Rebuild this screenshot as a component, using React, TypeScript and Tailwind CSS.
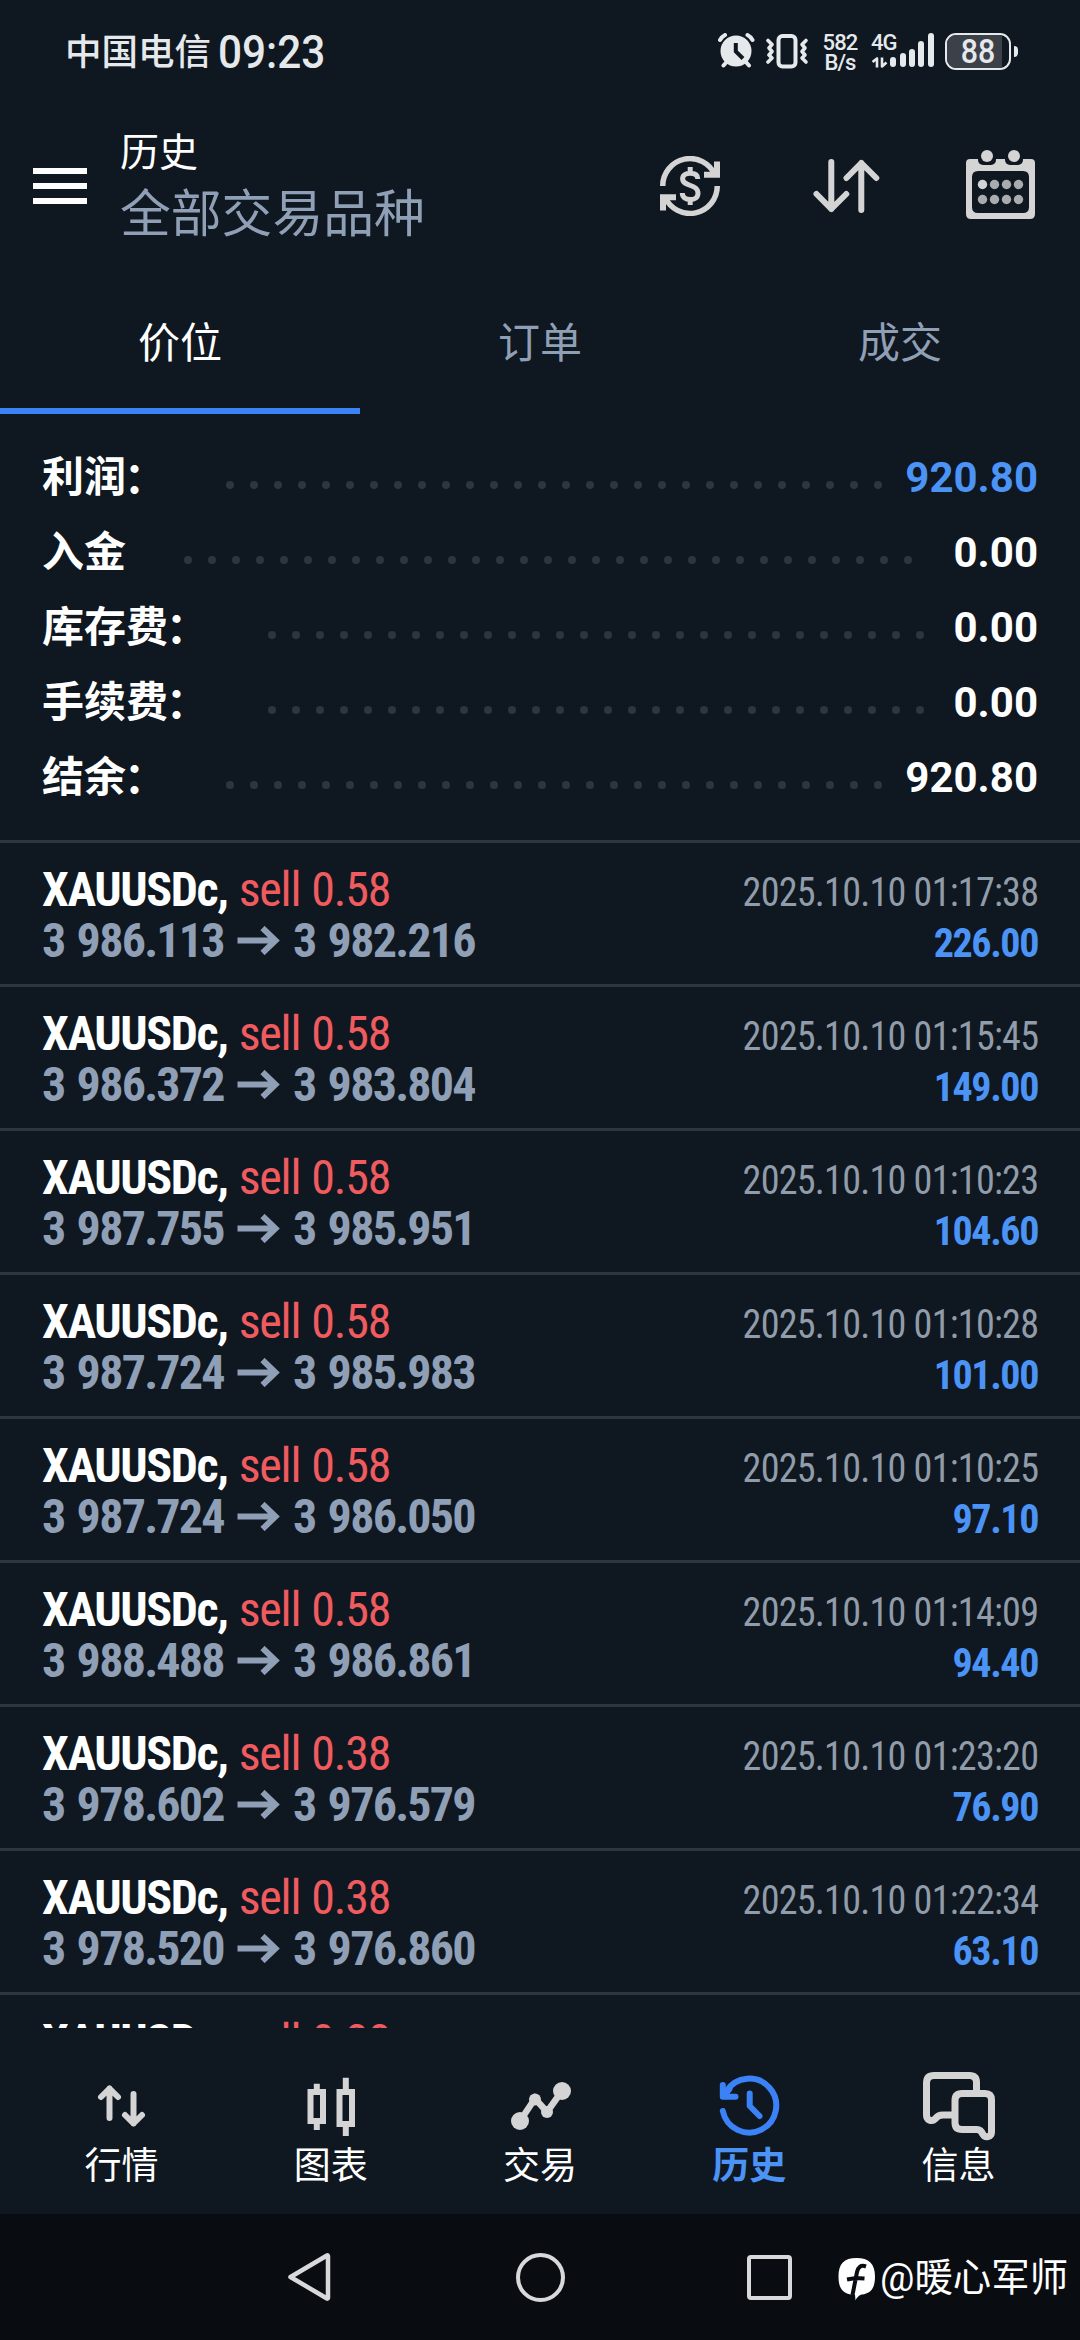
import React from 'react';

const summary = [
  { label: '利润', colon: true, value: '920.80', dots: 28, color: 'text-[#4b93f5]' },
  { label: '入金', colon: false, value: '0.00', dots: 31, color: 'text-white' },
  { label: '库存费', colon: true, value: '0.00', dots: 28, color: 'text-white' },
  { label: '手续费', colon: true, value: '0.00', dots: 28, color: 'text-white' },
  { label: '结余', colon: true, value: '920.80', dots: 28, color: 'text-white' }
];

const deals = [
  { volume: '0.58', open: '3 986.113', close: '3 982.216', time: '2025.10.10 01:17:38', profit: '226.00' },
  { volume: '0.58', open: '3 986.372', close: '3 983.804', time: '2025.10.10 01:15:45', profit: '149.00' },
  { volume: '0.58', open: '3 987.755', close: '3 985.951', time: '2025.10.10 01:10:23', profit: '104.60' },
  { volume: '0.58', open: '3 987.724', close: '3 985.983', time: '2025.10.10 01:10:28', profit: '101.00' },
  { volume: '0.58', open: '3 987.724', close: '3 986.050', time: '2025.10.10 01:10:25', profit: '97.10' },
  { volume: '0.58', open: '3 988.488', close: '3 986.861', time: '2025.10.10 01:14:09', profit: '94.40' },
  { volume: '0.38', open: '3 978.602', close: '3 976.579', time: '2025.10.10 01:23:20', profit: '76.90' },
  { volume: '0.38', open: '3 978.520', close: '3 976.860', time: '2025.10.10 01:22:34', profit: '63.10' },
  { volume: '0.38', open: '3 978.520', close: '3 976.880', time: '2025.10.10 01:22:30', profit: '62.30' }
];

const signalBars = ['h-[10px]', 'h-[14px]', 'h-[18px]', 'h-[26px]', 'h-[34px]'];

function StatusBar() {
  return (
    <div className="h-[108px] flex items-start justify-between pl-[65px] pr-[62px] pt-[30px] text-[#e6e9ec]">
      <div className="flex h-[42px] items-center font-medium">
        <span className="text-[36.5px] leading-[42px] w-[153px] pt-[3px] whitespace-nowrap">中国电信</span>
        <span className="text-[46px] leading-[42px] pt-[2px] origin-left scale-x-[0.92] whitespace-nowrap">09:23</span>
      </div>

      <div className="flex h-[42px] items-center">
        <svg width="37" height="36" viewBox="0 0 37 36" fill="none" stroke="currentColor" strokeWidth="4" strokeLinecap="round">
          <circle cx="18" cy="18" r="15.5" fill="currentColor" stroke="none" />
          <path d="M2 7 Q4 3.5 7 2 M29.5 2 Q32.5 3.5 34.5 7 M5.5 32.5 L9 28.5 M31 32.5 L27.5 28.5" />
          <path d="M17.8 10 V18.5 L25 25.5" stroke="#0f1720" strokeLinecap="butt" />
        </svg>
        <svg className="ml-[11px]" width="43" height="35" viewBox="0 0 43 35" fill="none" stroke="currentColor" strokeWidth="3.6" strokeLinecap="round" strokeLinejoin="round">
          <rect x="12.5" y="2" width="17" height="30.5" rx="4" strokeWidth="4" />
          <path d="M2 6.5 L6 10.5 L3 14 L6 17.5 L3 21 L6 24 L2 28" />
          <path d="M40 6.5 L36 10.5 L39 14 L36 17.5 L39 21 L36 24 L40 28" />
        </svg>
        <div className="ml-[13px] w-[36px] h-[42px] text-center text-[22px] leading-[19.5px] font-medium tracking-[-0.9px] pt-[3px]">
          <div>582</div>
          <div>B/s</div>
        </div>
        <div className="ml-[13px] relative h-[42px] w-[64px]">
          <span className="absolute left-0 top-[3px] text-[22px] leading-[20px] font-medium tracking-[-1px]">4G</span>
          <svg className="absolute left-[1px] top-[27px]" width="16" height="11" viewBox="0 0 16 11" fill="none" stroke="currentColor" strokeWidth="2.6" strokeLinejoin="round">
            <path d="M0.5 5 L5 1.5 V10.5 M10 0.5 V9.5 L14.5 5.5" />
          </svg>
          <div className="absolute right-[1.5px] bottom-[5px] flex items-end gap-[3.3px]">
            {signalBars.map((height, index) => (
              <div key={index} className={`w-[6px] rounded-full bg-current ${height}`} />
            ))}
          </div>
        </div>
        <div className="ml-[10px] w-[66px] h-[37px] rounded-[11px] border-[2.5px] border-current overflow-hidden flex relative">
          <div className="w-[55px] h-full bg-[#3c4149]" />
          <span className="absolute inset-0 text-center text-[33px] leading-[33px] font-medium scale-x-[0.92]">88</span>
        </div>
        <div className="ml-[3px] w-[4px] h-[11px] rounded-r-full bg-current" />
      </div>
    </div>
  );
}

function Header() {
  return (
    <div className="h-[144px] flex items-start">
      <div className="ml-[33px] mt-[60px] w-[54px] flex flex-col gap-[9px]">
        <div className="h-[6px] bg-white" />
        <div className="h-[6px] bg-white" />
        <div className="h-[6px] bg-white" />
      </div>
      <div className="ml-[33px] mt-[20px] flex-1">
        <div className="text-[39px] leading-[50px] text-white">历史</div>
        <div className="text-[50.8px] leading-[60px] mt-[7px] text-[#8f9fb5]">全部交易品种</div>
      </div>
      <div className="flex pr-[45px] mt-[42px] text-[#d4d4d5]">
        <svg className="mt-[6px]" width="60" height="60" viewBox="0 0 60 60" fill="none" stroke="currentColor" strokeWidth="5.5">
          <path d="M2.75 30 A27.25 27.25 0 0 1 55 19" />
          <path d="M57.25 30 A27.25 27.25 0 0 1 5 41" />
          <path d="M60 5.5 V21.7 H44 V15.7 H50 L54 12 V5.5 Z M0 54.5 V38.3 H16 V44.3 H10 L6 48 V54.5 Z" fill="currentColor" stroke="none" />
          <path d="M37.8 23 C37.8 18.5 34 17.3 30 17.3 C25.5 17.3 22.6 19.5 22.6 22.8 C22.6 31 38 27.5 38 37.2 C38 41.5 34.5 43.6 30.3 43.6 C25.8 43.6 22.3 41.5 22.3 37 M30.2 11 V17 M30.2 43 V49" strokeWidth="5" />
        </svg>
        <svg className="ml-[93px] mt-[9px]" width="67" height="54" viewBox="0 0 67 54" fill="none" stroke="currentColor" strokeWidth="6" strokeLinecap="round" strokeLinejoin="round">
          <path d="M18.3 3 V50 M3.5 35 L18.3 50 L33.3 35" />
          <path d="M48.3 51 V4 M33.5 19 L48.3 4 L63.3 19" />
        </svg>
        <svg className="ml-[86px]" width="69" height="69" viewBox="0 0 69 69" fill="currentColor">
          <path fillRule="evenodd" d="M4 9 H65 Q69 9 69 13 V64 Q69 69 64 69 H5 Q0 69 0 64 V13 Q0 9 4 9 Z M12 21 Q6 21 6 27 V57 Q6 63 12 63 H57 Q63 63 63 57 V27 Q63 21 57 21 Z" />
          <rect x="12" y="2" width="18" height="13" rx="5" fill="#0f1720" />
          <rect x="39" y="2" width="18" height="13" rx="5" fill="#0f1720" />
          <circle cx="21" cy="6" r="6" />
          <circle cx="48" cy="6" r="6" />
          {[34.5, 49.5].map(cy =>
            [16.5, 28.5, 40.5, 52.5].map(cx => (
              <circle key={`${cx}-${cy}`} cx={cx} cy={cy} r="4.7" fill={cx === 16.5 && cy === 34.5 ? '#d4d4d5' : '#a9abae'} />
            ))
          )}
        </svg>
      </div>
    </div>
  );
}

function Tabs() {
  return (
    <div className="h-[162px] grid grid-cols-3 text-center text-[42px] leading-[50px] text-[#8f9fb5]">
      <div className="text-white border-b-[6px] border-[#3b82f6] pt-[67px]">价位</div>
      <div className="pt-[67px]">订单</div>
      <div className="pt-[67px]">成交</div>
    </div>
  );
}

function Summary() {
  return (
    <div className="h-[426px] pt-[26px] px-[42px] font-bold text-[42px] leading-[75px]">
      {summary.map(row => (
        <div key={row.label} className="h-[75px] flex">
          <span className="text-white">{row.label}</span>
          {row.colon && <span className="-ml-[2px] mr-[2px] mt-px text-white">：</span>}
          <div className="ml-[58px] mt-[41px] flex gap-4">
            {Array.from({ length: row.dots }, (_, index) => (
              <div key={index} className="size-2 shrink-0 rounded-full bg-[#2d353e]" />
            ))}
          </div>
          <span className={`ml-auto ${row.color}`}>{row.value}</span>
        </div>
      ))}
    </div>
  );
}

function DealList() {
  return (
    <div className="h-[1188px] overflow-hidden font-stretch-condensed">
      {deals.map((deal, index) => (
        <div key={index} className="h-[144px] border-t-[3px] border-[#2d353f] px-[42px] flex justify-between whitespace-nowrap">
          <div className="pt-[21px] text-[48px] leading-[51px]">
            <div className="h-[51px] text-[#f05b60] tracking-[-1.25px] [word-spacing:1.4px]">
              <span className="font-bold text-white tracking-[-1.4px]">XAUUSDc,</span> sell {deal.volume}
            </div>
            <div className="h-[51px] flex font-bold text-[#8f9fb5] tracking-[-1.75px] [word-spacing:2.8px]">
              <span className="w-[195px]">{deal.open}</span>
              <svg className="mt-[11px] mr-[13px]" width="43" height="29" viewBox="0 0 43 29" fill="none" stroke="currentColor" strokeWidth="6">
                <path d="M0.5 14.5 H38.5 M25.5 2 L38.5 14.5 L25.5 27" />
              </svg>
              <span>{deal.close}</span>
            </div>
          </div>
          <div className="pt-[24px] text-[40px] leading-[51px] text-right">
            <div className="text-[#919caa] tracking-[-0.8px] origin-right scale-x-[0.953]">{deal.time}</div>
            <div className="font-bold text-[#4b93f5] tracking-[-1.4px]">{deal.profit}</div>
          </div>
        </div>
      ))}
    </div>
  );
}

function BottomNav() {
  const items = [
    {
      label: '行情',
      icon: (
        <g strokeWidth="6" strokeLinecap="round" strokeLinejoin="round">
          <path d="M28.5 48 V18.5 M20 27 L28.5 18.5 L37 27" />
          <path d="M52.5 24 V53.5 M44 45 L52.5 53.5 L61 45" />
        </g>
      )
    },
    {
      label: '图表',
      icon: (
        <g strokeWidth="6">
          <path d="M20.5 22 H33 V51 H20.5 Z M26.8 13.7 V22 M26.8 51 V60" />
          <path d="M49.5 22 H62 V54 H49.5 Z M55.8 7.7 V22 M55.8 54 V66" />
        </g>
      )
    },
    {
      label: '交易',
      icon: (
        <g strokeWidth="6.5">
          <path d="M21 51 L36 28.5 L48 42 L63 21" />
          <g fill="currentColor" stroke="none">
            <circle cx="21" cy="51" r="9" />
            <circle cx="36" cy="29.5" r="6" />
            <circle cx="48" cy="42" r="6" />
            <circle cx="63" cy="21" r="9" />
          </g>
        </g>
      )
    },
    {
      label: '历史',
      active: true,
      icon: (
        <g strokeWidth="6" strokeLinecap="round" strokeLinejoin="round">
          <path d="M14.8 41 A27 27 0 1 0 18.5 21" />
          <path d="M14.8 15 V26.8 H27.5 M15.5 26 L21.5 19" />
          <path d="M41.7 23.5 V36 L51.500 46" />
        </g>
      )
    },
    {
      label: '信息',
      icon: (
        <g strokeWidth="7">
          <path d="M59.5 20 V12.5 Q59.5 5.5 52.5 5.5 H17 Q9.5 5.5 9.5 13 V45 C9.5 50.5 15 52 18 49 C21 46 22 45 26 45 H35" />
          <path d="M45 23.5 H68 Q74.5 23.5 74.5 30 V62 C74.5 67.5 68 68 66 64.5 C64.5 61 63 59.5 60 59.5 H45 Q38 59.5 38 52.5 V30.5 Q38 23.5 45 23.5 Z" />
        </g>
      )
    }
  ];

  return (
    <div className="h-[186px] pt-[42px] px-[17px] grid grid-cols-5 justify-items-center">
      {items.map(item => (
        <div key={item.label} className={`flex flex-col items-center ${item.active ? 'text-[#3b82f6]' : 'text-[#d4d4d5]'}`}>
          <svg width="82" height="75" viewBox="0 0 82 75" fill="none" stroke="currentColor">
            {item.icon}
          </svg>
          <span className={`text-[37px] leading-[44px] ${item.active ? 'font-bold text-[#4b93f5]' : 'text-white'}`}>
            {item.label}
          </span>
        </div>
      ))}
    </div>
  );
}

function SystemNav() {
  return (
    <div className="h-[126px] bg-[#090c10] flex items-center relative">
      <div className="flex items-center pl-[286px] text-[#d8d9da]">
        <svg width="46" height="50" viewBox="0 0 46 50" fill="none" stroke="currentColor" strokeWidth="4.5" strokeLinejoin="round">
          <path d="M4.5 25 L41 3.5 Q42 3 42 4.5 V45.5 Q42 47 41 46.5 Z" />
        </svg>
        <div className="ml-[184px] size-[49px] rounded-full border-[4.5px] border-current" />
        <div className="ml-[182px] size-[45px] rounded-[4px] border-[4.5px] border-current" />
      </div>
      <div className="absolute left-[838px] top-[41px] flex items-center text-white">
        <svg className="mt-[2px]" width="38" height="44" viewBox="0 0 38 44">
          <path d="M18.5 1 C31 1 37 6.5 37 19.5 C37 31 33 36.5 24 37.5 C21 38 18.5 41 17.5 43.5 L17 37.8 C5 37.5 0.5 32 0.5 19.5 C0.5 6.5 6 1 18.5 1 Z" fill="currentColor" />
          <path d="M28 9.5 C22.5 7.5 20 10.5 19 15 L14.5 38 M9 22.5 C14 21.5 20 21 26.5 21.5" fill="none" stroke="#090c10" strokeWidth="4" />
        </svg>
        <span className="ml-[4px] text-[38.4px] leading-[46px] whitespace-nowrap">@暖心军师</span>
      </div>
    </div>
  );
}

export default function App() {
  return (
    <div className="w-[1080px] h-[2340px] overflow-hidden bg-[#0f1720] [font-family:Roboto,'Noto_Sans_CJK_SC',sans-serif]">
      <StatusBar />
      <Header />
      <Tabs />
      <Summary />
      <DealList />
      <BottomNav />
      <SystemNav />
    </div>
  );
}
